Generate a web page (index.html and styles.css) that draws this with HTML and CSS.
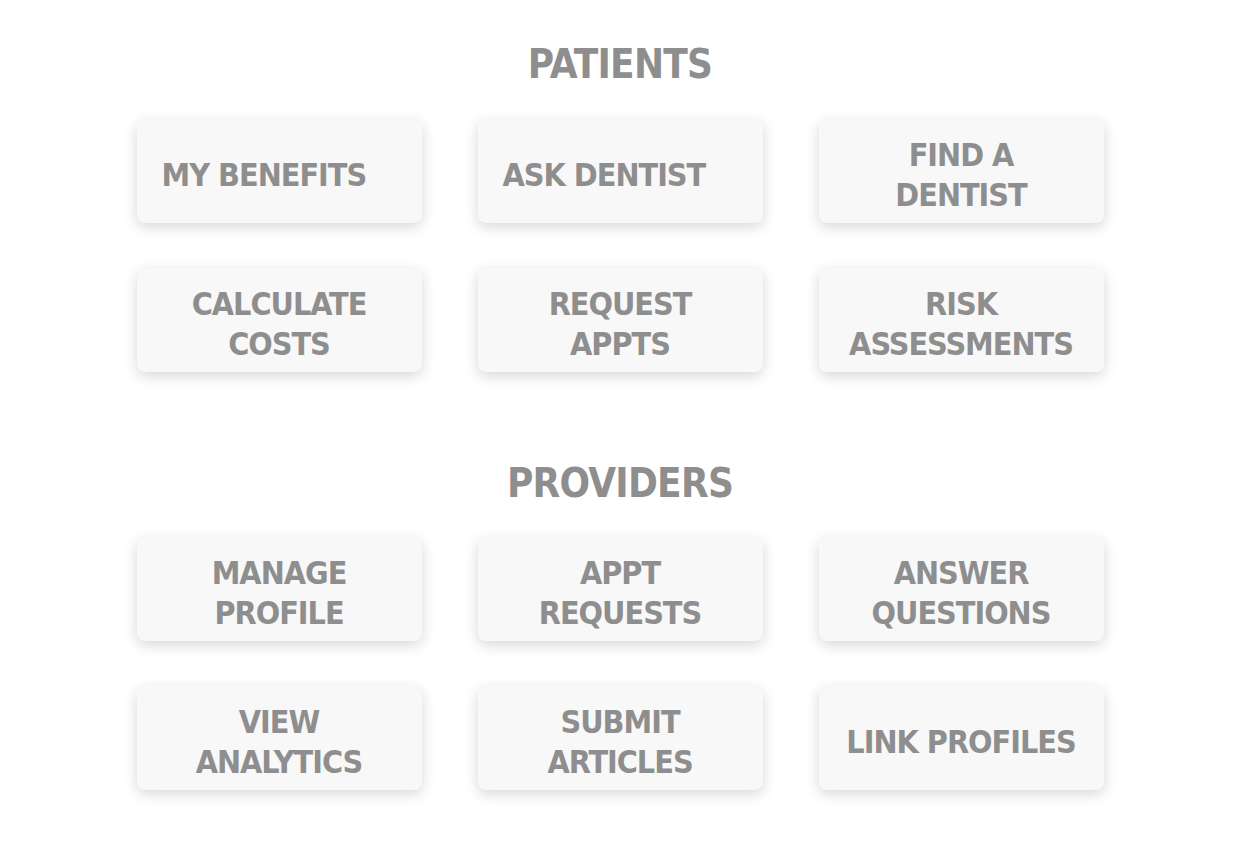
FILE: index.html
```html
<!DOCTYPE html>
<html>
<head>
<meta charset="utf-8">
<link rel="stylesheet" href="styles.css">
</head>
<body>
<main class="page">
  <section class="group">
    <h2 class="group-title">PATIENTS</h2>
    <div class="grid">
      <a class="tile left">MY BENEFITS</a>
      <a class="tile left">ASK DENTIST</a>
      <a class="tile">FIND A<br>DENTIST</a>
      <a class="tile">CALCULATE<br>COSTS</a>
      <a class="tile">REQUEST<br>APPTS</a>
      <a class="tile">RISK<br>ASSESSMENTS</a>
    </div>
  </section>
  <section class="group second">
    <h2 class="group-title">PROVIDERS</h2>
    <div class="grid">
      <a class="tile">MANAGE<br>PROFILE</a>
      <a class="tile">APPT<br>REQUESTS</a>
      <a class="tile">ANSWER<br>QUESTIONS</a>
      <a class="tile">VIEW<br>ANALYTICS</a>
      <a class="tile">SUBMIT<br>ARTICLES</a>
      <a class="tile">LINK PROFILES</a>
    </div>
  </section>
</main>
</body>
</html>
```
FILE: styles.css
```css
html, body {
  margin: 0;
  padding: 0;
  background: #ffffff;
}
.page {
  width: 967px;
  margin: 0 auto;
  padding: 39px 0 60px;
  font-family: "DejaVu Sans Condensed", "DejaVu Sans", sans-serif;
  font-weight: bold;
  color: #8e8e8e;
}
.group-title {
  margin: 0 0 30px;
  height: 50px;
  line-height: 50px;
  font-size: 40px;
  letter-spacing: -0.75px;
  text-align: center;
  font-weight: bold;
  color: #8e8e8e;
}
.second {
  margin-top: 86px;
}
.second .group-title {
  margin-bottom: 29px;
}
.grid {
  display: grid;
  grid-template-columns: repeat(3, 285px);
  grid-auto-rows: 104px;
  column-gap: 56px;
  row-gap: 45px;
}
.tile {
  display: flex;
  align-items: center;
  justify-content: center;
  text-align: center;
  background: #f8f8f8;
  border-radius: 8px;
  box-shadow: 0 4px 14px rgba(0, 0, 0, 0.16);
  font-size: 32px;
  letter-spacing: -1px;
  line-height: 40px;
  padding-top: 7px;
  box-sizing: border-box;
}
.tile.left {
  justify-content: flex-start;
  text-align: left;
  padding-left: 25px;
}
```
